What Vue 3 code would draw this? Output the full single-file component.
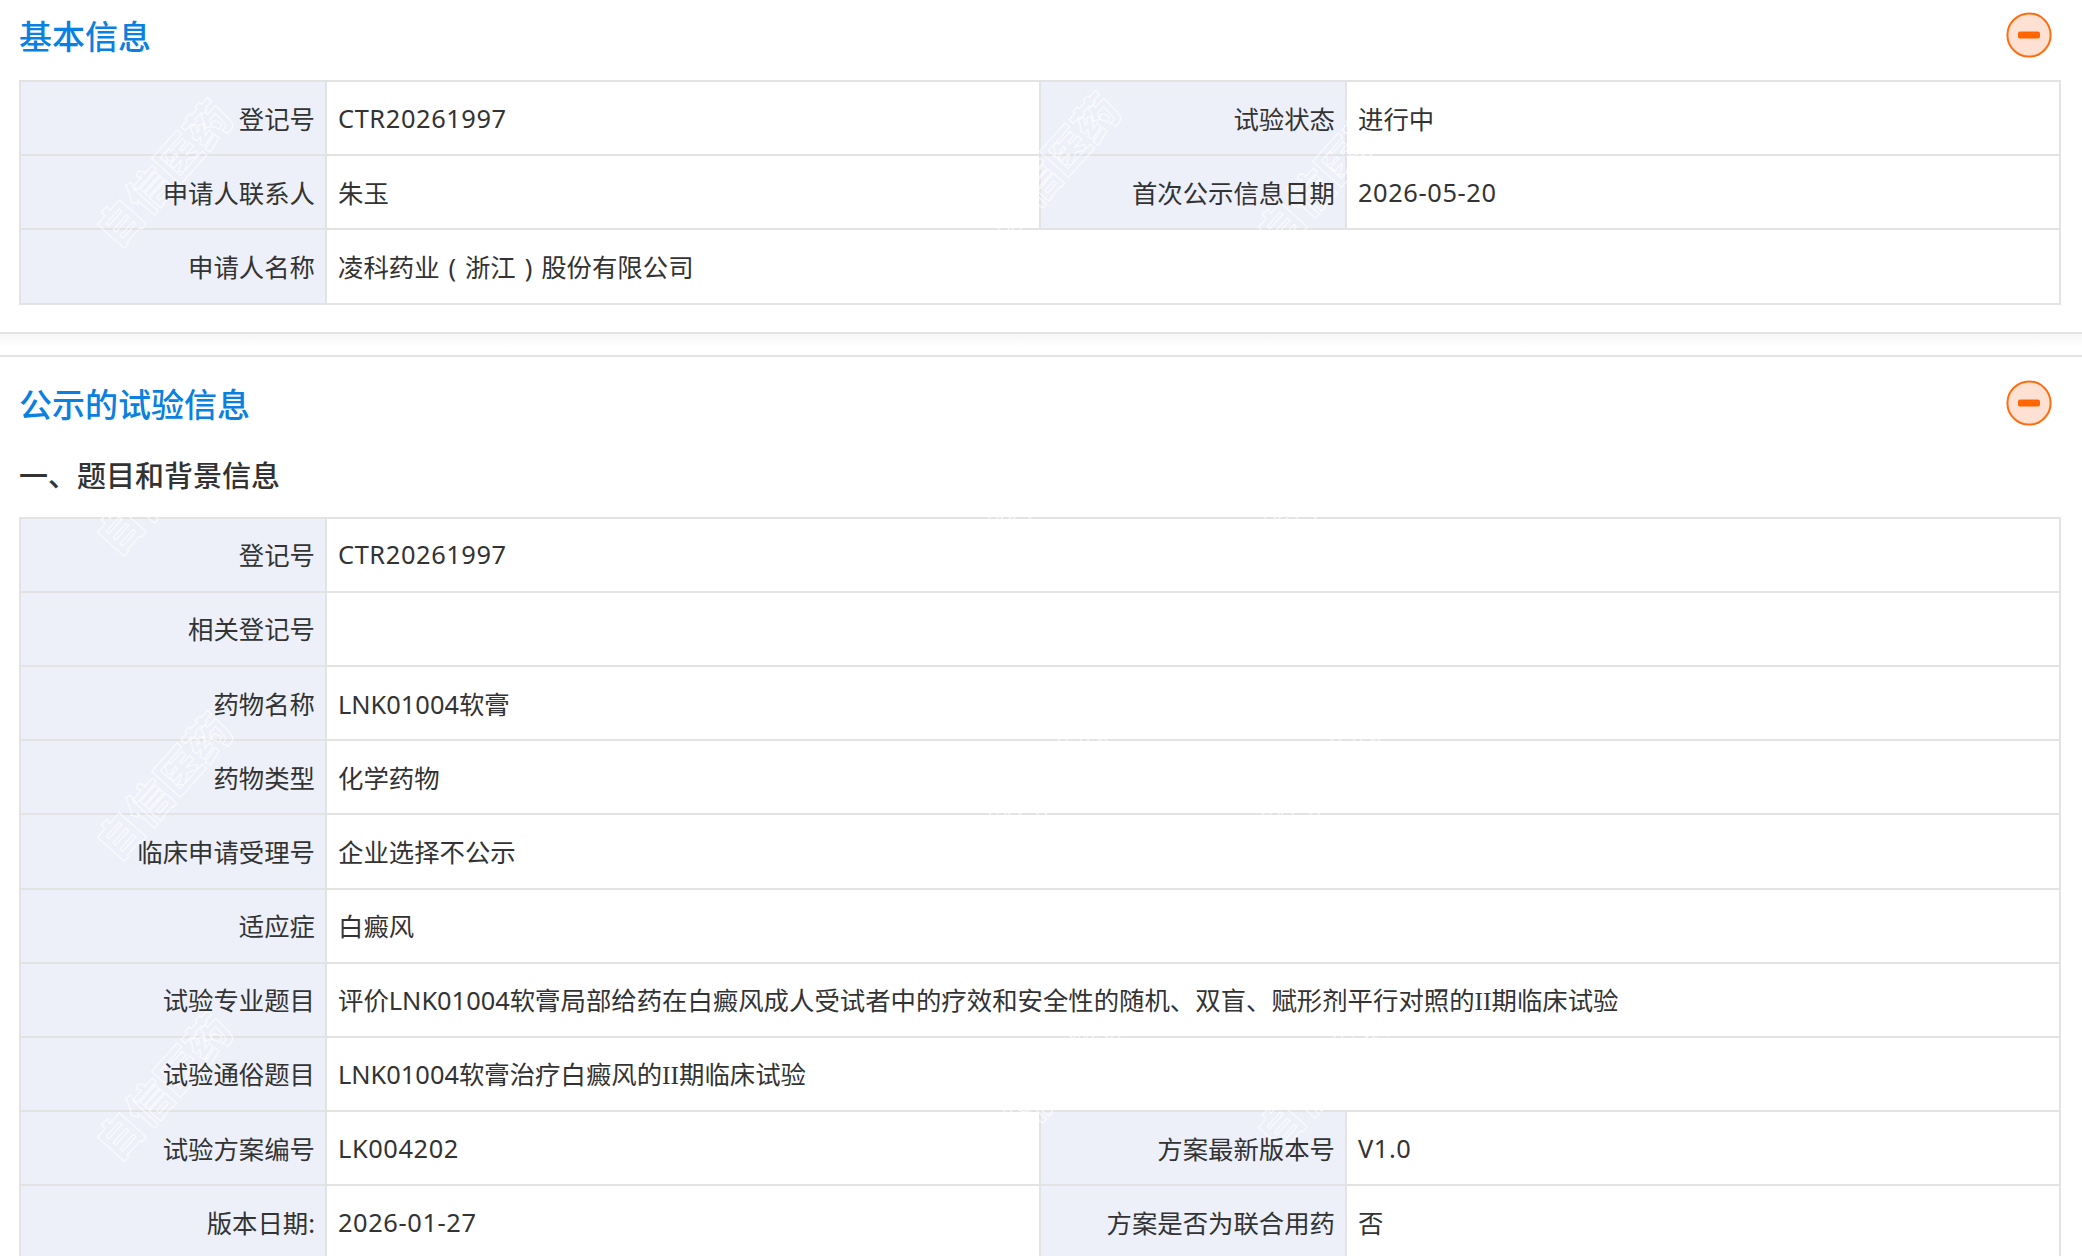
<script setup>
const basicInfo = [
  { label: '登记号', value: 'CTR20261997' },
  { label: '试验状态', value: '进行中' },
  { label: '申请人联系人', value: '朱玉' },
  { label: '首次公示信息日期', value: '2026-05-20' },
  { label: '申请人名称', value: '凌科药业 ( 浙江 ) 股份有限公司', wide: true }
]

const trialInfo = [
  { label: '登记号', value: 'CTR20261997', wide: true },
  { label: '相关登记号', value: '', wide: true },
  { label: '药物名称', value: 'LNK01004软膏', wide: true },
  { label: '药物类型', value: '化学药物', wide: true },
  { label: '临床申请受理号', value: '企业选择不公示', wide: true },
  { label: '适应症', value: '白癜风', wide: true },
  { label: '试验专业题目', value: '评价LNK01004软膏局部给药在白癜风成人受试者中的疗效和安全性的随机、双盲、赋形剂平行对照的II期临床试验', wide: true },
  { label: '试验通俗题目', value: 'LNK01004软膏治疗白癜风的II期临床试验', wide: true },
  { label: '试验方案编号', value: 'LK004202' },
  { label: '方案最新版本号', value: 'V1.0' },
  { label: '版本日期:', value: '2026-01-27' },
  { label: '方案是否为联合用药', value: '否' }
]

const isLatin = (text) => /^[\x00-\x7f]+$/.test(text)

// centres of the faint watermark stamps
const stamps = []
for (const y of [172, 480, 785, 1085]) stamps.push({ x: 162, y })
for (const y of [165, 470, 775, 1080]) stamps.push({ x: 1050, y })
for (const y of [175, 475, 775, 1075]) stamps.push({ x: 1323, y })
</script>

<template>
  <div class="page">
    <section class="section">
      <div class="section-head first">
        <h2>基本信息</h2>
        <svg class="toggle" width="46" height="46" viewBox="0 0 46 46">
          <circle cx="23" cy="23" r="21.6" fill="#ffe1d4" stroke="#ff6d0d" stroke-width="2"/>
          <rect x="12" y="19.5" width="22" height="7" rx="2" fill="#ff6600"/>
        </svg>
      </div>
      <div class="info-grid">
        <template v-for="item in basicInfo" :key="item.label">
          <div class="cell label"><span>{{ item.label }}</span></div>
          <div class="cell value" :class="{ wide: item.wide }">
            <span :class="{ latin: isLatin(item.value) }">{{ item.value }}</span>
          </div>
        </template>
      </div>
    </section>

    <div class="band"></div>

    <section class="section">
      <div class="section-head second">
        <h2>公示的试验信息</h2>
        <svg class="toggle" width="46" height="46" viewBox="0 0 46 46">
          <circle cx="23" cy="23" r="21.6" fill="#ffe1d4" stroke="#ff6d0d" stroke-width="2"/>
          <rect x="12" y="19.5" width="22" height="7" rx="2" fill="#ff6600"/>
        </svg>
      </div>
      <h3>一、题目和背景信息</h3>
      <div class="info-grid">
        <template v-for="item in trialInfo" :key="item.label">
          <div class="cell label"><span>{{ item.label }}</span></div>
          <div class="cell value" :class="{ wide: item.wide }">
            <span :class="{ latin: isLatin(item.value) }">
              <template v-for="(part, i) in item.value.split('II')" :key="i"><i v-if="i" class="roman">II</i>{{ part }}</template>
            </span>
          </div>
        </template>
      </div>
    </section>

    <div class="watermarks">
      <span
        v-for="(s, i) in stamps"
        :key="i"
        class="stamp"
        :style="{ left: s.x + 'px', top: s.y + 'px' }"
      >自信医药</span>
    </div>
  </div>
</template>

<style scoped>
.page {
  position: relative;
  width: 2082px;
  height: 1256px;
  overflow: hidden;
  background: #fff;
  color: #333;
  font-family: "Noto Sans", "Noto Sans CJK SC", sans-serif;
  font-size: 25.4px;
}

.section {
  padding: 0 21px 0 19px;
}

.section-head {
  display: flex;
  align-items: center;
  justify-content: space-between;
}

.section-head.first {
  height: 70px;
  margin-bottom: 10px;
}

.section-head.second {
  height: 92px;
}

.section-head h2 {
  position: relative;
  z-index: 2;
  margin: 0;
  font-size: 33px;
  font-weight: 500;
  color: #0a80e0;
}

.toggle {
  margin-right: 9px;
}

h3 {
  position: relative;
  z-index: 2;
  margin: 9px 0 23px;
  height: 36px;
  line-height: 36px;
  font-size: 29px;
  font-weight: 500;
  color: #333;
}

.info-grid {
  display: grid;
  grid-template-columns: 306px 714px 306px 1fr;
  grid-auto-rows: 74.2px;
  border-top: 2px solid #e3e3e3;
  border-left: 2px solid #e3e3e3;
}

.cell {
  display: flex;
  align-items: center;
  padding-bottom: 1px;
  border-right: 2px solid #e3e3e3;
  border-bottom: 2px solid #e3e3e3;
  white-space: nowrap;
}

.cell span {
  position: relative;
  z-index: 2;
}

.label {
  justify-content: flex-end;
  padding-right: 10px;
  background: #edf0f9;
}

.value {
  padding-left: 11px;
  word-spacing: 2.3px;
}

.value.wide {
  grid-column: span 3;
}

.latin {
  letter-spacing: 0.6px;
}

.roman {
  font-family: "Liberation Serif", serif;
  font-style: normal;
}

.band {
  height: 21px;
  margin-top: 27px;
  border-top: 2px solid #e3e3e3;
  border-bottom: 2px solid #e3e3e3;
  background: linear-gradient(#f7f7f7, #fff 60%);
}

.watermarks {
  position: absolute;
  inset: 0;
  z-index: 1;
  pointer-events: none;
}

.stamp {
  position: absolute;
  transform: translate(-50%, -50%) rotate(-48deg);
  font-size: 44px;
  font-weight: 900;
  white-space: nowrap;
  color: transparent;
  -webkit-text-stroke: 1px rgba(255, 255, 255, 0.8);
}
</style>
